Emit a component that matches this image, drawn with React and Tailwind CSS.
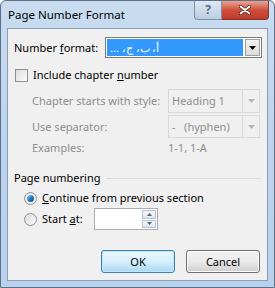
import React from 'react';

const font = { fontFamily: '"Noto Sans", "Open Sans", sans-serif' };

function Arrow({ color = '#000' }) {
  return (
    <svg width="7" height="4" viewBox="0 0 7 4">
      <path d="M0 0h7L3.5 4z" fill={color} />
    </svg>
  );
}

function Combo({ label }) {
  return (
    <div className="flex h-full w-[92px] border border-[#d9d9d9] bg-[#f0f0f0]">
      <div className="flex flex-1 items-center pl-[3px] text-[#8d8d8d]">{label}</div>
      <div className="flex w-[17px] items-center justify-center border-l border-[#d9d9d9]">
        <Arrow color="#b5b5b5" />
      </div>
    </div>
  );
}

export default function App() {
  return (
    <div className="w-[275px] h-[288px] overflow-hidden whitespace-nowrap text-[11px] leading-[14px] text-black" style={font}>
      <div className="flex h-full flex-col rounded-t-[6px] border border-[#5c6f86] bg-gradient-to-b from-[#c9dcf0] via-[#bcd4ee] to-[#b8d1ec]">
        <div className="flex h-[27px] shrink-0 items-start">
          <div className="pl-[7px] pt-[7px] text-[11.5px]">Page Number Format</div>
          <div className="ml-auto mr-[5px] flex">
            <div className="flex h-[19px] w-[28px] items-center justify-center rounded-bl-[4px] border border-t-0 border-[#7d8fa6] bg-gradient-to-b from-[#dfe8f3] to-[#bccde1] text-[12px] font-bold text-[#5a6b80]">?</div>
            <div className="flex h-[19px] w-[47px] items-center justify-center rounded-br-[4px] border border-l-0 border-t-0 border-[#7a3a32] bg-gradient-to-b from-[#e8a496] via-[#cf4f3a] to-[#c0392b]">
              <svg width="12" height="10" viewBox="0 0 12 10">
                <path d="M1.5 1.5l9 7M10.5 1.5l-9 7" stroke="#3a1a14" strokeWidth="3.4" strokeLinecap="round" />
                <path d="M1.5 1.5l9 7M10.5 1.5l-9 7" stroke="#fff" strokeWidth="2" strokeLinecap="round" />
              </svg>
            </div>
          </div>
        </div>
        <div className="mx-[6px] mb-[6px] flex flex-1 flex-col border border-[#8a9db4] bg-[#f0f0f0]">
          <div className="mt-[8px] flex h-[21px] items-center pl-[6px]">
            <span className="w-[91px]">Number <u>f</u>ormat:</span>
            <div className="flex h-full w-[157px] border border-[#7a7a7a] bg-white p-[1px]">
              <div className="flex flex-1 items-center bg-[#3399ff] pl-[3px] text-white">
                <span dir="rtl">أ، ب، ج، ...</span>
              </div>
              <div className="ml-[2px] flex w-[15px] items-center justify-center border border-[#a0a0a0] bg-gradient-to-b from-[#f2f2f2] to-[#dcdcdc]">
                <Arrow />
              </div>
            </div>
          </div>
          <div className="mt-[9px] flex h-[16px] items-center pl-[7px]">
            <div className="mr-[5px] h-[13px] w-[13px] border border-[#8f8f8f] bg-gradient-to-br from-[#dcdcdc] to-[#fbfbfb]" />
            <span>Include chapter <u>n</u>umber</span>
          </div>
          <div className="mt-[6px] flex h-[24px] items-center pl-[24px] text-[#8d8d8d]">
            <span className="w-[136px]">Chapter starts with style:</span>
            <Combo label="Heading 1" />
          </div>
          <div className="mt-[2px] flex h-[23px] items-center pl-[24px] text-[#8d8d8d]">
            <span className="w-[136px]">Use separator:</span>
            <Combo label={'-\u00a0\u00a0\u00a0(hyphen)'} />
          </div>
          <div className="mt-[2px] flex h-[16px] items-center pl-[24px] text-[#8d8d8d]">
            <span className="w-[136px]">Examples:</span>
            <span>1-1, 1-A</span>
          </div>
          <div className="mt-[14px] flex h-[16px] items-center pl-[6px] pr-[6px]">
            <span>Page numbering</span>
            <div className="ml-[6px] h-px flex-1 bg-[#dcdcdc]" />
          </div>
          <div className="mt-[4px] flex h-[16px] items-center pl-[16px]">
            <div className="mr-[5px] flex h-[13px] w-[13px] items-center justify-center rounded-full border border-[#8f8f8f] bg-gradient-to-br from-[#e6e6e6] to-[#fafafa]">
              <div className="h-[7px] w-[7px] rounded-full bg-gradient-to-br from-[#9fd7f5] via-[#1b7cc0] to-[#0b4d84]" />
            </div>
            <span><u>C</u>ontinue from previous section</span>
          </div>
          <div className="mt-[2px] flex h-[22px] items-center pl-[16px]">
            <div className="mr-[5px] h-[13px] w-[13px] rounded-full border border-[#8f8f8f] bg-gradient-to-br from-[#dcdcdc] to-[#fbfbfb]" />
            <span className="w-[52px]">Start <u>a</u>t:</span>
            <div className="flex h-full w-[64px] border border-[#abadb3] bg-white">
              <div className="flex-1" />
              <div className="flex w-[15px] flex-col gap-[1px] py-[1px] pr-[1px]">
                <div className="flex flex-1 items-center justify-center border border-[#b8c4d2] bg-gradient-to-b from-[#f4f7fb] to-[#dfe6ee]">
                  <svg width="5" height="3" viewBox="0 0 5 3"><path d="M0 3h5L2.5 0z" fill="#4d6185" /></svg>
                </div>
                <div className="flex flex-1 items-center justify-center border border-[#b8c4d2] bg-gradient-to-b from-[#f4f7fb] to-[#dfe6ee]">
                  <svg width="5" height="3" viewBox="0 0 5 3"><path d="M0 0h5L2.5 3z" fill="#4d6185" /></svg>
                </div>
              </div>
            </div>
          </div>
          <div className="mt-[20px] flex justify-end gap-[11px] pr-[7px]">
            <button className="h-[23px] w-[74px] rounded-[3px] border border-[#3c7fb1] bg-gradient-to-b from-[#eaf6fd] via-[#d9f0fc] to-[#a7d9f5] shadow-[inset_0_0_0_1px_#c4e5f6]">OK</button>
            <button className="h-[23px] w-[74px] rounded-[3px] border border-[#707070] bg-gradient-to-b from-[#f2f2f2] via-[#ebebeb] to-[#cfcfcf] shadow-[inset_0_0_0_1px_#fcfcfc]">Cancel</button>
          </div>
        </div>
      </div>
    </div>
  );
}
